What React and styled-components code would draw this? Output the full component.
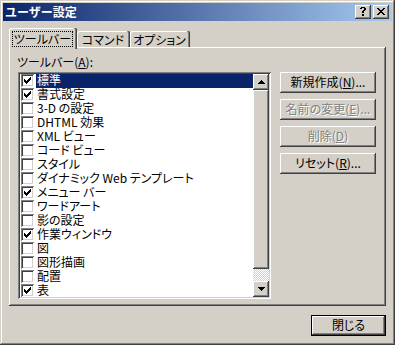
import React from 'react';
import styled, { createGlobalStyle } from 'styled-components';

const GlobalStyle = createGlobalStyle`
  html, body {
    margin: 0;
    padding: 0;
    background: #d4d0c8;
  }
  body {
    font-family: "Noto Sans CJK JP", "Noto Sans", sans-serif;
    font-size: 12px;
    font-feature-settings: "palt";
    color: #000;
  }
`;

const raised = `
  box-shadow: inset -1px -1px #404040, inset 1px 1px #fff,
    inset -2px -2px #808080, inset 2px 2px #d4d0c8;
`;

const sunken = `
  box-shadow: inset 1px 1px #808080, inset -1px -1px #fff,
    inset 2px 2px #404040, inset -2px -2px #d4d0c8;
`;

const toolbars = [
  { name: '標準', on: true },
  { name: '書式設定', on: true },
  { name: '3-D の設定' },
  { name: 'DHTML 効果' },
  { name: 'XML ビュー' },
  { name: 'コード ビュー' },
  { name: 'スタイル' },
  { name: 'ダイナミック Web テンプレート' },
  { name: 'メニュー バー', on: true },
  { name: 'ワードアート' },
  { name: '影の設定' },
  { name: '作業ウィンドウ', on: true },
  { name: '図' },
  { name: '図形描画' },
  { name: '配置' },
  { name: '表', on: true },
];

const Pixels = ({ w, h, d }) => (
  <svg width={w} height={h} viewBox={`0 0 ${w} ${h}`} shapeRendering="crispEdges">
    <path d={d} fill="#000" />
  </svg>
);

const CHECK = 'M0 2h1v3H0zM1 3h1v3H1zM2 4h1v3H2zM3 3h1v3H3zM4 2h1v3H4zM5 1h1v3H5zM6 0h1v3H6z';
const UP = 'M3 0h1v1h1v1h1v1h1v1H0V3h1V2h1V1h1z';
const DOWN = 'M0 0h7v1H6v1H5v1H4v1H3V3H2V2H1V1H0z';
const CLOSE = 'M0 0h2v1H0zM6 0h2v1H6zM1 1h2v1H1zM5 1h2v1H5zM2 2h4v1H2zM3 3h2v1H3zM2 4h4v1H2zM1 5h2v1H1zM5 5h2v1H5zM0 6h2v1H0zM6 6h2v1H6z';
const HELP = 'M1 0h4v1H1zM0 1h2v1H0zM4 1h2v2H4zM3 3h2v1H3zM2 4h2v2H2zM2 7h2v2H2z';

const Window = styled.div`
  box-sizing: border-box;
  width: 395px;
  height: 345px;
  padding: 3px;
  background: #d4d0c8;
  box-shadow: inset -1px -1px #404040, inset 1px 1px #d4d0c8,
    inset -2px -2px #808080, inset 2px 2px #fff;
  display: flex;
  flex-direction: column;
`;

const TitleBar = styled.div`
  height: 18px;
  flex-shrink: 0;
  display: flex;
  align-items: center;
  padding: 0 3px 0 2px;
  background: linear-gradient(to right, #0a246a, #a6caf0);
`;

const TitleText = styled.div`
  flex: 1;
  color: #fff;
  font-weight: bold;
  line-height: 14px;
  font-feature-settings: normal;
`;

const CaptionButtons = styled.div`
  display: flex;
  gap: 2px;
`;

const CaptionButton = styled.div`
  width: 16px;
  height: 14px;
  box-sizing: border-box;
  background: #d4d0c8;
  ${raised}
  display: flex;
  align-items: center;
  justify-content: center;
  padding-bottom: 1px;
`;

const Client = styled.div`
  flex: 1;
  display: flex;
  flex-direction: column;
  padding: 7px 6px 0 6px;
`;

const TabStrip = styled.div`
  height: 19px;
  display: flex;
  align-items: flex-end;
`;

const Tab = styled.div`
  box-sizing: border-box;
  width: ${(p) => p.$w}px;
  height: ${(p) => (p.$active ? 21 : 16)}px;
  margin-bottom: ${(p) => (p.$active ? -2 : 0)}px;
  position: relative;
  z-index: ${(p) => (p.$active ? 1 : 0)};
  background: #d4d0c8;
  border-radius: 2px 2px 0 0;
  box-shadow: inset -1px 0 #404040, inset -2px 0 #808080, inset 1px 1px #fff;
  display: flex;
  justify-content: ${(p) => (p.$active ? 'flex-start' : 'center')};
  padding: ${(p) => (p.$active ? '3px 0 0 3px' : '1px 1px 0 0')};
  line-height: 15px;
  white-space: nowrap;
`;

const FocusBox = styled.div`
  box-sizing: border-box;
  width: 61px;
  height: 16px;
  border: 1px dotted #000;
  line-height: 14px;
  text-align: center;
`;

const Panel = styled.div`
  box-sizing: border-box;
  width: 377px;
  height: 259px;
  padding: 8px 10px 0 9px;
  box-shadow: inset -1px -1px #404040, inset 1px 1px #fff, inset -2px -2px #808080;
`;

const FieldLabel = styled.div`
  height: 14px;
  line-height: 14px;
  margin: 0 0 3px -1px;
`;

const PanelBody = styled.div`
  display: flex;
  gap: 9px;
`;

const ListBox = styled.div`
  box-sizing: border-box;
  width: 253px;
  height: 227px;
  padding: 2px;
  display: flex;
  background: #fff;
  ${sunken}
`;

const List = styled.div`
  flex: 1;
  background: #fff;
`;

const Row = styled.div`
  height: 13.94px;
  display: flex;
  align-items: center;
`;

const CheckBox = styled.div`
  width: 13px;
  height: 13px;
  flex-shrink: 0;
  margin-left: 1px;
  box-sizing: border-box;
  background: #fff;
  ${sunken}
  display: flex;
  align-items: center;
  justify-content: center;
`;

const RowLabel = styled.div`
  flex: 1;
  align-self: stretch;
  margin-left: 2px;
  padding: 0 0 1px 1px;
  display: flex;
  align-items: center;
  line-height: 12px;
  white-space: nowrap;
  background: ${(p) => (p.$selected ? '#0a246a' : 'transparent')};
  color: ${(p) => (p.$selected ? '#fff' : '#000')};
`;

const ScrollBar = styled.div`
  width: 16px;
  display: flex;
  flex-direction: column;
`;

const ScrollButton = styled.div`
  height: 16px;
  flex-shrink: 0;
  box-sizing: border-box;
  background: #d4d0c8;
  ${raised}
  display: flex;
  align-items: center;
  justify-content: center;
`;

const Thumb = styled.div`
  flex: 1;
  background: #d4d0c8;
  ${raised}
`;

const Track = styled.div`
  height: 12px;
  flex-shrink: 0;
  background-image: repeating-conic-gradient(#d4d0c8 0% 25%, #fff 0% 50%);
  background-size: 2px 2px;
`;

const SideButtons = styled.div`
  width: 96px;
  display: flex;
  flex-direction: column;
  gap: 6px;
`;

const Button = styled.div`
  box-sizing: border-box;
  width: ${(p) => p.$w || 96}px;
  height: 21px;
  padding-bottom: 2px;
  display: flex;
  align-items: center;
  justify-content: center;
  line-height: 12px;
  white-space: nowrap;
  background: #d4d0c8;
  color: ${(p) => (p.$disabled ? '#808080' : '#000')};
  text-shadow: ${(p) => (p.$disabled ? '1px 1px #fff' : 'none')};
  ${raised}
  ${(p) =>
    p.$default &&
    `box-shadow: inset 0 0 0 1px #000, inset -2px -2px #404040, inset 2px 2px #fff,
      inset -3px -3px #808080, inset 3px 3px #d4d0c8;`}

  u {
    text-underline-offset: 1px;
  }
`;

const Footer = styled.div`
  margin-top: 9px;
  display: flex;
  justify-content: flex-end;
`;

export default function App() {
  return (
    <>
      <GlobalStyle />
      <Window>
        <TitleBar>
          <TitleText>ユーザー設定</TitleText>
          <CaptionButtons>
            <CaptionButton>
              <Pixels w={6} h={9} d={HELP} />
            </CaptionButton>
            <CaptionButton>
              <Pixels w={8} h={7} d={CLOSE} />
            </CaptionButton>
          </CaptionButtons>
        </TitleBar>
        <Client>
          <TabStrip>
            <Tab $active $w={68}>
              <FocusBox>ツールバー</FocusBox>
            </Tab>
            <Tab $w={53}>コマンド</Tab>
            <Tab $w={60}>オプション</Tab>
          </TabStrip>
          <Panel>
            <FieldLabel>
              ツールバー(<u>A</u>):
            </FieldLabel>
            <PanelBody>
              <ListBox>
                <List>
                  {toolbars.map((t, i) => (
                    <Row key={t.name}>
                      <CheckBox>{t.on && <Pixels w={7} h={7} d={CHECK} />}</CheckBox>
                      <RowLabel $selected={i === 0}>{t.name}</RowLabel>
                    </Row>
                  ))}
                </List>
                <ScrollBar>
                  <ScrollButton>
                    <Pixels w={7} h={4} d={UP} />
                  </ScrollButton>
                  <Thumb />
                  <Track />
                  <ScrollButton>
                    <Pixels w={7} h={4} d={DOWN} />
                  </ScrollButton>
                </ScrollBar>
              </ListBox>
              <SideButtons>
                <Button>
                  新規作成(<u>N</u>)...
                </Button>
                <Button $disabled>
                  名前の変更(<u>E</u>)...
                </Button>
                <Button $disabled>
                  削除(<u>D</u>)
                </Button>
                <Button>
                  リセット(<u>R</u>)...
                </Button>
              </SideButtons>
            </PanelBody>
          </Panel>
          <Footer>
            <Button $default $w={75}>
              閉じる
            </Button>
          </Footer>
        </Client>
      </Window>
    </>
  );
}
